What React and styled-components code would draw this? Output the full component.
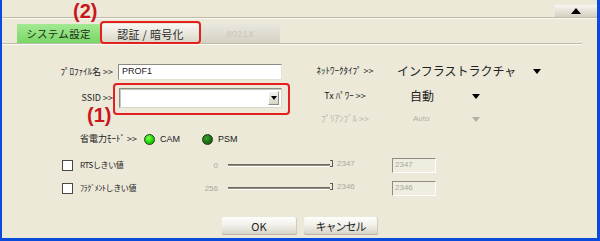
import React from "react"
import styled, { createGlobalStyle, css } from "styled-components"

const GlobalStyle = createGlobalStyle`
  html, body {
    margin: 0;
    padding: 0;
    width: 600px;
    height: 241px;
    overflow: hidden;
    background: #ece9d8;
  }
`

const XP_BLUE = "#0b4bdb"
const LINE = "#bfbba9"

const Frame = styled.div`
  position: relative;
  width: 600px;
  height: 241px;
  box-sizing: border-box;
  background: #ece9d8;
  border-left: 2px solid ${XP_BLUE};
  border-right: 3px solid ${XP_BLUE};
  border-bottom: 3px solid ${XP_BLUE};
  font-family: "Noto Sans CJK JP", "Liberation Sans", sans-serif;
  color: #222;
  display: flex;
  flex-direction: column;
`

const TopBar = styled.div`
  height: 17px;
  flex: none;
  border-bottom: 1px solid ${LINE};
  box-shadow: 0 1px 0 #faf9f4;
  display: flex;
  justify-content: flex-end;
  align-items: flex-end;
`

const CollapseButton = styled.div`
  width: 42px;
  height: 12px;
  background: linear-gradient(#f7f6f1, #d4d0bf);
  display: flex;
  align-items: center;
  justify-content: center;
`

const UpTriangle = styled.div`
  width: 0;
  height: 0;
  border-left: 5px solid transparent;
  border-right: 5px solid transparent;
  border-bottom: 6px solid #000;
`

const TabRow = styled.div`
  display: flex;
  margin: 6px 15px 0 0;
  padding-left: 15px;
  border-bottom: 1px solid ${LINE};
  box-shadow: 0 1px 0 #fbfaf5;
`

const tabVariants = {
  active: css`
    background: linear-gradient(#a3e993, #78d766);
    color: #1d2b17;
  `,
  normal: css`
    background: linear-gradient(#f8f7f2, #dad6c6);
    color: #2c2c2c;
    font-size: 11px;
  `,
  disabled: css`
    background: linear-gradient(#e9e7dd, #d5d2c4);
    color: #cac7bb;
    font-family: "Liberation Sans", sans-serif;
    font-size: 9px;
  `,
}

const Tab = styled.div`
  width: ${p => p.$w}px;
  height: 19px;
  display: flex;
  align-items: center;
  justify-content: center;
  font-size: 10.5px;
  letter-spacing: 0.3px;
  ${p => tabVariants[p.$variant || "normal"]}
`

const Columns = styled.div`
  display: flex;
`

const LeftCol = styled.div`
  width: 288px;
  padding-top: 20px;
  display: flex;
  flex-direction: column;
`

const FieldRow = styled.div`
  display: flex;
  align-items: center;
  margin-top: ${p => p.$top || 0}px;
`

const FieldLabel = styled.div`
  width: 111px;
  text-align: right;
  font-size: 9px;
  line-height: 10px;
`

const TextInput = styled.div`
  margin-left: 5px;
  width: 164px;
  height: 16px;
  box-sizing: border-box;
  background: #fff;
  border: 1px solid;
  border-color: #8e8b80 #e4e1d6 #e4e1d6 #8e8b80;
  padding: 1px 3px;
  font-family: "Liberation Sans", sans-serif;
  font-size: 9px;
  line-height: 11px;
`

const Combo = styled.div`
  margin-left: 6px;
  width: 163px;
  height: 20px;
  box-sizing: border-box;
  background: #fff;
  border: 1px solid;
  border-color: #8e8b80 #d8d5ca #d8d5ca #8e8b80;
  box-shadow: inset 1px 1px 0 #c8c5ba;
  display: flex;
  justify-content: flex-end;
  align-items: center;
  padding-right: 2px;
`

const ComboButton = styled.div`
  width: 11px;
  height: 14px;
  box-sizing: border-box;
  background: linear-gradient(#f4f3ee, #d8d5c8);
  border: 1px solid;
  border-color: #fff #8e8b80 #8e8b80 #fff;
  display: flex;
  align-items: center;
  justify-content: center;
`

const DownTriangle = styled.div`
  width: 0;
  height: 0;
  border-left: ${p => p.$size || 4}px solid transparent;
  border-right: ${p => p.$size || 4}px solid transparent;
  border-top: ${p => (p.$size || 4) + 1}px solid ${p => p.$color || "#000"};
`

const RightCol = styled.div`
  margin-left: 15px;
  padding-top: 15px;
  display: flex;
  flex-direction: column;
`

const OptRow = styled.div`
  display: flex;
  align-items: center;
  height: ${p => p.$h}px;
`

const OptLabel = styled.div`
  width: 80px;
  text-align: center;
  font-size: 9px;
  line-height: 10px;
  color: ${p => (p.$disabled ? "#b8b5a9" : "#222")};
`

const OptValue = styled.div`
  margin-left: ${p => p.$ml}px;
  width: ${p => p.$w}px;
  font-size: ${p => p.$size}px;
  line-height: 1;
  color: ${p => (p.$disabled ? "#b3b0a4" : "#222")};
  font-family: ${p =>
    p.$latin
      ? `"Liberation Sans", sans-serif`
      : `"Noto Sans CJK JP", sans-serif`};
`

const PowerRow = styled.div`
  display: flex;
  align-items: center;
  height: 18px;
  margin-top: 1px;
  padding-left: 78px;
`

const PowerLabel = styled.div`
  width: 64px;
  font-size: 9px;
  line-height: 10px;
`

const RadioOption = styled.div`
  width: ${p => p.$w}px;
  display: flex;
  align-items: center;
  gap: 5px;
  font-family: "Liberation Sans", sans-serif;
  font-size: 9px;
`

const RadioDot = styled.div`
  width: 11px;
  height: 11px;
  box-sizing: border-box;
  border-radius: 50%;
  border: 1px solid #1d3a12;
  background: ${p =>
    p.$on
      ? "radial-gradient(circle at 40% 35%, #7dff5a, #1fd800 55%, #12a000)"
      : "radial-gradient(circle at 40% 35%, #3aa030, #186a12 60%, #0f4a0b)"};
`

const ThresholdRow = styled.div`
  display: flex;
  align-items: center;
  height: 18px;
  margin-top: ${p => p.$top}px;
  padding-left: 60px;
`

const CheckBox = styled.div`
  width: 11px;
  height: 11px;
  box-sizing: border-box;
  background: #fff;
  border: 1px solid #4a4a44;
`

const ThresholdLabel = styled.div`
  margin-left: 7px;
  width: 110px;
  font-size: 8px;
  line-height: 10px;
  letter-spacing: -0.4px;
`

const SmallGray = styled.div`
  font-family: "Liberation Sans", sans-serif;
  font-size: 8px;
  color: #aaa79b;
`

const MinVal = styled(SmallGray)`
  width: 28px;
  text-align: right;
`

const Track = styled.div`
  margin-left: 10px;
  width: 102px;
  height: 1px;
  background: #8f8c80;
  border-top: 1px solid #6c6960;
  border-bottom: 1px solid #fff;
`

const Thumb = styled.div`
  width: 3px;
  height: 7px;
  margin-top: -3px;
  box-sizing: border-box;
  border: 1px solid #5e5b53;
  border-left: none;
  background: #ece9d8;
`

const MaxVal = styled(SmallGray)`
  margin-left: 4px;
  margin-top: -4px;
  width: 55px;
`

const ValueBox = styled(SmallGray)`
  width: 44px;
  height: 15px;
  box-sizing: border-box;
  border: 1px solid;
  border-color: #8e8b80 #fdfdfa #fdfdfa #8e8b80;
  padding: 1px 2px;
  line-height: 10px;
  background: #efece0;
`

const ButtonRow = styled.div`
  display: flex;
  justify-content: center;
  gap: 7px;
  margin-top: 20px;
`

const PushButton = styled.div`
  width: ${p => p.$w}px;
  height: 18px;
  display: flex;
  align-items: center;
  justify-content: center;
  border-radius: 2px;
  background: linear-gradient(#fefefc, #f1f0ea 45%, #d5d2c3);
  box-shadow: inset 0 -1px 0 #bab7a6, inset -1px 0 0 #d0cdbe;
  font-size: 11px;
  color: #222;
  letter-spacing: ${p => p.$ls || 0}px;
`

const RedBox = styled.div`
  position: absolute;
  left: ${p => p.$x}px;
  top: ${p => p.$y}px;
  width: ${p => p.$w}px;
  height: ${p => p.$h}px;
  box-sizing: border-box;
  border: 2px solid #e3201d;
  border-radius: 4px;
  pointer-events: none;
`

const Callout = styled.div`
  position: absolute;
  left: ${p => p.$x}px;
  top: ${p => p.$y}px;
  font-family: "Liberation Sans", sans-serif;
  font-weight: 700;
  font-size: 20px;
  line-height: 20px;
  color: #c8161a;
`

const thresholds = [
  { label: "RTSしきい値", min: "0", max: "2347", top: 8 },
  { label: "ﾌﾗｸﾞﾒﾝﾄしきい値", min: "256", max: "2346", top: 5 },
]

export default function App() {
  return (
    <>
      <GlobalStyle />
      <Frame>
        <TopBar>
          <CollapseButton>
            <UpTriangle />
          </CollapseButton>
        </TopBar>

        <TabRow>
          <Tab $w={83} $variant="active">システム設定</Tab>
          <Tab $w={101}>認証 / 暗号化</Tab>
          <Tab $w={79} $variant="disabled">8021X</Tab>
        </TabRow>

        <Columns>
          <LeftCol>
            <FieldRow>
              <FieldLabel>ﾌﾟﾛﾌｧｲﾙ名 &gt;&gt;</FieldLabel>
              <TextInput>PROF1</TextInput>
            </FieldRow>
            <FieldRow $top={8}>
              <FieldLabel>SSID &gt;&gt;</FieldLabel>
              <Combo>
                <ComboButton>
                  <DownTriangle $size={3} />
                </ComboButton>
              </Combo>
            </FieldRow>
          </LeftCol>

          <RightCol>
            <OptRow $h={24}>
              <OptLabel>ﾈｯﾄﾜｰｸﾀｲﾌﾟ &gt;&gt;</OptLabel>
              <OptValue $ml={12} $w={136} $size={12}>インフラストラクチャ</OptValue>
              <DownTriangle />
            </OptRow>
            <OptRow $h={26}>
              <OptLabel>Tx ﾊﾟﾜｰ &gt;&gt;</OptLabel>
              <OptValue $ml={25} $w={62} $size={12}>自動</OptValue>
              <DownTriangle />
            </OptRow>
            <OptRow $h={20}>
              <OptLabel $disabled>ﾌﾟﾘｱﾝﾌﾞﾙ &gt;&gt;</OptLabel>
              <OptValue $ml={28} $w={59} $size={8} $latin $disabled>Auto</OptValue>
              <DownTriangle $color="#b3b0a4" />
            </OptRow>
          </RightCol>
        </Columns>

        <PowerRow>
          <PowerLabel>省電力ﾓｰﾄﾞ &gt;&gt;</PowerLabel>
          <RadioOption $w={58}>
            <RadioDot $on />
            CAM
          </RadioOption>
          <RadioOption $w={50}>
            <RadioDot />
            PSM
          </RadioOption>
        </PowerRow>

        {thresholds.map(t => (
          <ThresholdRow key={t.label} $top={t.top}>
            <CheckBox />
            <ThresholdLabel>{t.label}</ThresholdLabel>
            <MinVal>{t.min}</MinVal>
            <Track />
            <Thumb />
            <MaxVal>{t.max}</MaxVal>
            <ValueBox>{t.max}</ValueBox>
          </ThresholdRow>
        ))}

        <ButtonRow>
          <PushButton $w={75}>OK</PushButton>
          <PushButton $w={74} $ls={-1}>キャンセル</PushButton>
        </ButtonRow>

        <RedBox $x={98} $y={21} $w={101} $h={23} />
        <Callout $x={71} $y={1}>(2)</Callout>
        <RedBox $x={111} $y={83} $w={177} $h={32} />
        <Callout $x={85} $y={105}>(1)</Callout>
      </Frame>
    </>
  )
}
